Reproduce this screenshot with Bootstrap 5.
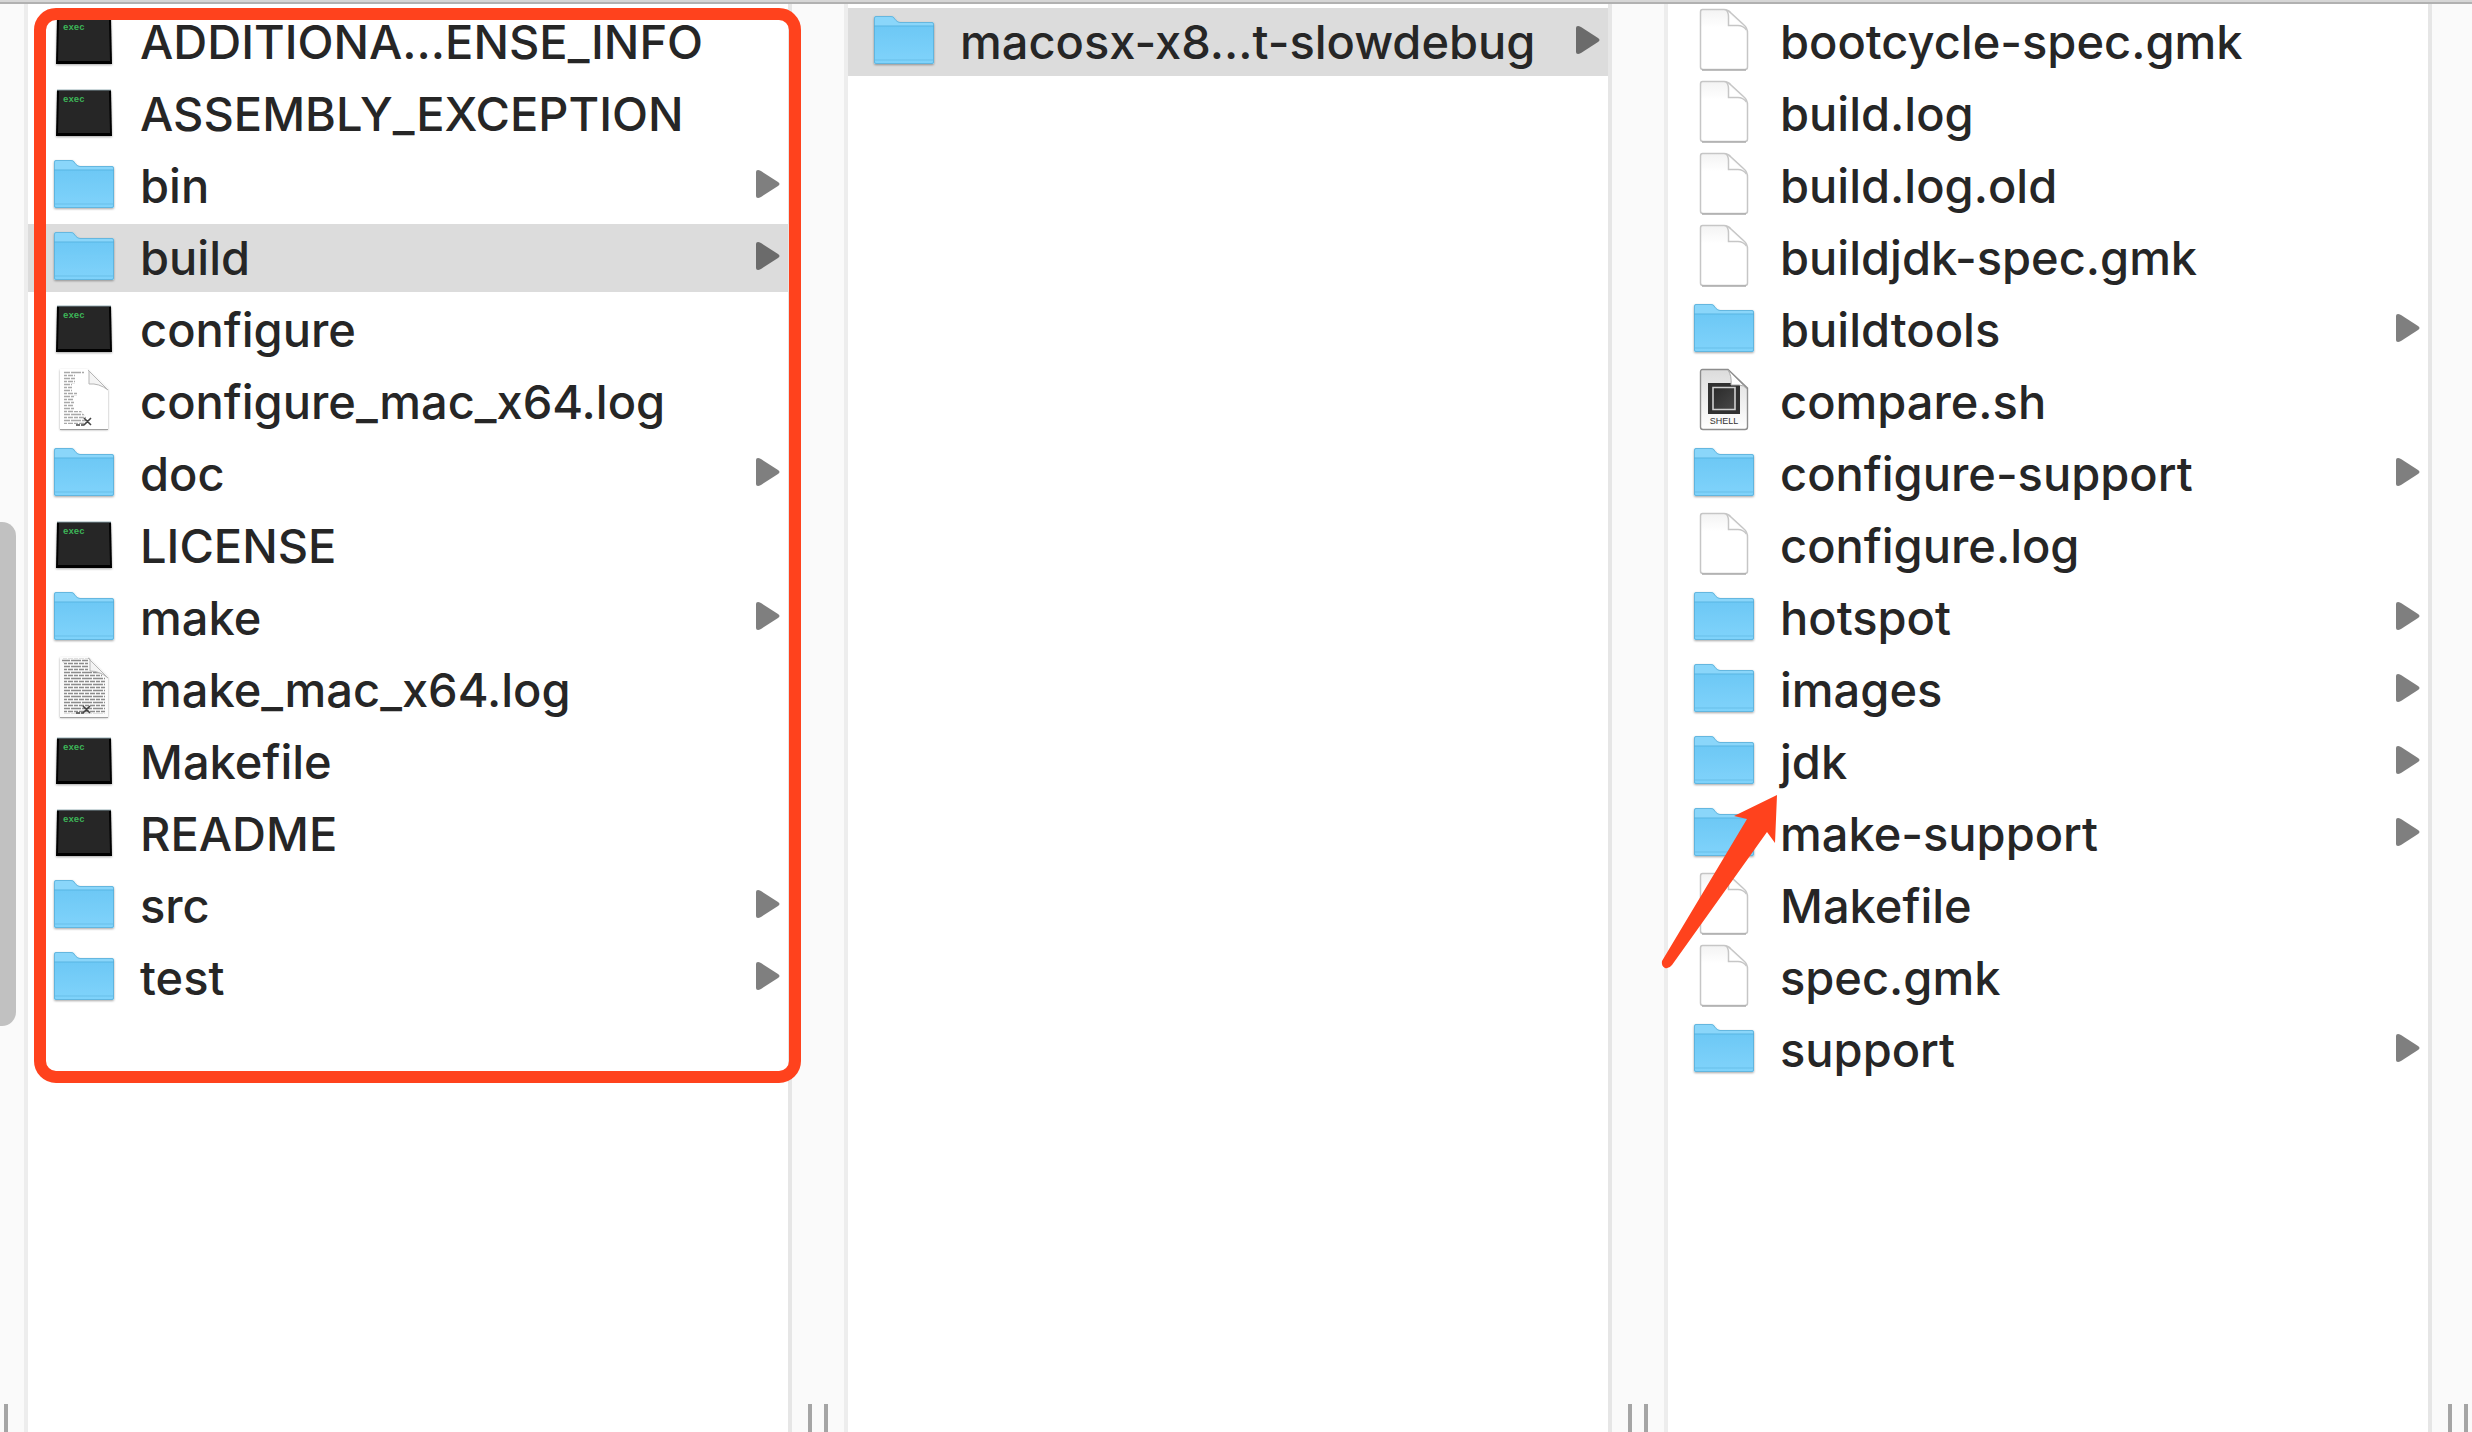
<!DOCTYPE html>
<html lang="en">
<head>
<meta charset="utf-8">
<meta name="viewport" content="width=device-width, initial-scale=1">
<title>Finder columns</title>
<link rel="stylesheet" href="https://cdn.jsdelivr.net/npm/bootstrap@5.3.0/dist/css/bootstrap.min.css">
<style>
  body { font-family: Inter, "Noto Sans", sans-serif; color: #262626; background: #fff; }
  .finder { border-top: 2px solid #d6d6d6; }
  .browser { border-top: 2px solid #b1b1b1; }
  .pane { flex: 1 1 0; min-width: 0; padding-top: 4px; }
  .entry { height: 68px; margin-bottom: 4px; padding: 0 8px 0 24px; gap: 24px; color: inherit; font-size: 47px; font-weight: 500; line-height: 68px; }
  .entry.selected { background: #dcdcdc; }
  .entry .icon { width: 64px; height: 68px; }
  .entry .chevron { width: 24px; height: 28px; margin-bottom: 4px; fill: #7f7f7f; }
  .entry.selected .chevron { fill: #6b6b6b; }
  .gutter { width: 60px; flex: none; gap: 12px; padding-left: 16px; background: #fafafa; border-left: 4px solid #e6e6e6; border-right: 4px solid #ededed; }
  .gutter-first { width: 28px; padding-left: 4px; border-left: 0; }
  .gutter-last { width: 44px; border-right: 0; }
  .grip { width: 4px; height: 28px; background: #a5a5a5; }
  .scroll-thumb { position: absolute; left: 0; top: 518px; width: 16px; height: 504px; background: #c1c1c1; border-radius: 0 14px 14px 0; }
  .highlight-box { position: absolute; top: 4px; left: 6px; right: -13px; height: 1075px; border: 12px solid #ff421d; border-radius: 22px; pointer-events: none; }
  .pointer { position: absolute; left: -8px; top: 788px; width: 124px; height: 180px; fill: #ff421d; pointer-events: none; }
</style>
</head>
<body>
<svg class="position-absolute" width="0" height="0" aria-hidden="true">
  <defs>
    <linearGradient id="g-folder" x1="0" y1="0" x2="0" y2="1"><stop offset="0" stop-color="#6dc8f5"/><stop offset="1" stop-color="#80d3fb"/></linearGradient>
    <linearGradient id="g-doc" x1="0" y1="0" x2="0" y2="1"><stop offset="0" stop-color="#f3f3f3"/><stop offset=".3" stop-color="#fff"/></linearGradient>
    <linearGradient id="g-shell" x1="0" y1="0" x2="0" y2="1"><stop offset="0" stop-color="#dcdcdc"/><stop offset="1" stop-color="#fff"/></linearGradient>
    <linearGradient id="g-screen" x1="0" y1="0" x2="1" y2="1"><stop offset="0" stop-color="#2a2a2a"/><stop offset="1" stop-color="#484848"/></linearGradient>
    <filter id="soft" x="-10%" y="-10%" width="120%" height="130%"><feDropShadow dx="0" dy="1" stdDeviation="1" flood-opacity=".35"/></filter>
    <pattern id="lines" width="11" height="6" patternUnits="userSpaceOnUse"><path d="M0 1.5H4M5 1.5H10M0 4.5H7M8 4.5H11" stroke="#8c8c8c" stroke-width="1.4"/></pattern>
  </defs>
  <symbol id="folder" viewBox="0 0 64 68">
    <g filter="url(#soft)">
      <path d="M2 54V10Q2 8 4 8H19Q21 8 22 9L24 12Q26 14 28 14H60Q62 14 62 16V54Q62 56 60 56H4Q2 56 2 54Z" fill="#8ad6fa"/>
      <path d="M2 18H62V54Q62 56 60 56H4Q2 56 2 54Z" fill="url(#g-folder)"/>
    </g>
    <path d="M2 18H62" stroke="#58b5e3"/><path d="M3 52H61" stroke="#68bfe9"/>
    <path d="M2.5 54V10Q2.5 8.500 4 8.500H19Q21 8.500 22 10L24 12.500Q26 14.500 28 14.500H60Q61.500 14.500 61.500 16V54Q61.500 55.500 60 55.500H4Q2.500 55.500 2.500 54Z" fill="none" stroke="#56a9d3" stroke-opacity=".7"/>
  </symbol>
  <symbol id="terminal" viewBox="0 0 64 68">
    <path d="M5 10H59L60 56H4Z" fill="#000" filter="url(#soft)"/>
    <path d="M5 10H59" stroke="#9fb6bd"/>
    <path d="M7 11H57L58 53H6Z" fill="#262626"/>
    <text x="11" y="22" font-family="Liberation Mono, monospace" font-weight="700" font-size="9" fill="#3db558">exec</text>
  </symbol>
  <symbol id="document" viewBox="0 0 64 68">
    <path d="M10.500 1.500H32Q36 1.500 39 5L52 17Q55.500 20 55.500 25V59Q55.500 61.500 53 61.500H11Q8.500 61.500 8.500 59V4Q8.500 1.500 10.500 1.500Z" fill="url(#g-doc)" stroke="#c6c6c6" stroke-width="1.500"/>
    <path d="M10 62H54" stroke="#acacac" stroke-width="1.500"/>
    <path d="M34 2Q36.500 4 36.500 9V17.500H46Q51 17.500 54.500 22" fill="#fff" stroke="#c6c6c6" stroke-width="1.500"/>
  </symbol>
  <symbol id="log-short" viewBox="0 0 64 68">
    <path d="M8 1H35L56 21V61H8Z" fill="#fff" filter="url(#soft)"/>
    <path d="M8 61.500H56" stroke="#a0a0a0"/>
    <path d="M12 3H32V6H23V16H20V24H25V28H22V43H29L34 49V56H12Z" fill="url(#lines)" opacity=".75"/>
    <path d="M37 3V16Q47 15 56 22L36 2Z" fill="#f4f4f4" stroke="#b5b5b5"/>
    <path d="M24 57H28M29 57H32M32 50L39 57M32 57L39 50" stroke="#444" stroke-width="1.600"/>
  </symbol>
  <symbol id="log-full" viewBox="0 0 64 68">
    <path d="M8 1H36L56 21V61H8Z" fill="#fbfbfb" filter="url(#soft)"/>
    <path d="M8 61.500H56" stroke="#a0a0a0"/>
    <path d="M10 2H36V15H50V21H53V58H12V7H10Z" fill="url(#lines)"/>
    <path d="M38 3V15Q48 15 56 22L36 2Z" fill="#f4f4f4" stroke="#b5b5b5"/>
    <path d="M24 57H28M29 57H32M31 50L38 57M31 57L38 50" stroke="#444" stroke-width="1.600"/>
  </symbol>
  <symbol id="shell" viewBox="0 0 64 68">
    <path d="M10.500 1.500H36L55.500 20V59Q55.500 61.500 53 61.500H11Q8.500 61.500 8.500 59V4Q8.500 1.500 10.500 1.500Z" fill="url(#g-shell)" stroke="#8d8d8d" stroke-width="1.400"/>
    <path d="M16 15H48V46H16Z" fill="#303030"/>
    <path d="M21 19.500H43V41.500H21Z" fill="url(#g-screen)" stroke="#d0d0d0" stroke-width="1.600"/>
    <path d="M36 2Q40 8 39 17H47Q52 17 55 21Z" fill="#fff" stroke="#aaa"/>
    <text x="32" y="56" text-anchor="middle" font-family="Liberation Sans, sans-serif" font-weight="400" font-size="9" fill="#333">SHELL</text>
  </symbol>
  <symbol id="chevron" viewBox="0 0 24 28">
    <path d="M0 2Q0 0 2 0Q3 0 5 1L22 12Q25 14 22 16L5 27Q3 28 2 28Q0 28 0 26Z"/>
  </symbol>
</svg>

<main class="finder min-vh-100 d-flex flex-column">
  <div class="browser d-flex flex-grow-1 position-relative overflow-hidden">
    <div class="gutter gutter-first d-flex align-items-end"><span class="grip"></span></div>
    <div class="scroll-thumb"></div>

    <nav class="pane position-relative" aria-label="Source folder">
      <a href="#" class="entry d-flex align-items-center text-decoration-none"><svg class="icon flex-shrink-0"><use href="#terminal"/></svg><span class="flex-grow-1 text-nowrap">ADDITIONA...ENSE_INFO</span></a>
      <a href="#" class="entry d-flex align-items-center text-decoration-none"><svg class="icon flex-shrink-0"><use href="#terminal"/></svg><span class="flex-grow-1 text-nowrap">ASSEMBLY_EXCEPTION</span></a>
      <a href="#" class="entry d-flex align-items-center text-decoration-none"><svg class="icon flex-shrink-0"><use href="#folder"/></svg><span class="flex-grow-1 text-nowrap">bin</span><svg class="chevron flex-shrink-0"><use href="#chevron"/></svg></a>
      <a href="#" class="entry selected d-flex align-items-center text-decoration-none" aria-current="true"><svg class="icon flex-shrink-0"><use href="#folder"/></svg><span class="flex-grow-1 text-nowrap">build</span><svg class="chevron flex-shrink-0"><use href="#chevron"/></svg></a>
      <a href="#" class="entry d-flex align-items-center text-decoration-none"><svg class="icon flex-shrink-0"><use href="#terminal"/></svg><span class="flex-grow-1 text-nowrap">configure</span></a>
      <a href="#" class="entry d-flex align-items-center text-decoration-none"><svg class="icon flex-shrink-0"><use href="#log-short"/></svg><span class="flex-grow-1 text-nowrap">configure_mac_x64.log</span></a>
      <a href="#" class="entry d-flex align-items-center text-decoration-none"><svg class="icon flex-shrink-0"><use href="#folder"/></svg><span class="flex-grow-1 text-nowrap">doc</span><svg class="chevron flex-shrink-0"><use href="#chevron"/></svg></a>
      <a href="#" class="entry d-flex align-items-center text-decoration-none"><svg class="icon flex-shrink-0"><use href="#terminal"/></svg><span class="flex-grow-1 text-nowrap">LICENSE</span></a>
      <a href="#" class="entry d-flex align-items-center text-decoration-none"><svg class="icon flex-shrink-0"><use href="#folder"/></svg><span class="flex-grow-1 text-nowrap">make</span><svg class="chevron flex-shrink-0"><use href="#chevron"/></svg></a>
      <a href="#" class="entry d-flex align-items-center text-decoration-none"><svg class="icon flex-shrink-0"><use href="#log-full"/></svg><span class="flex-grow-1 text-nowrap">make_mac_x64.log</span></a>
      <a href="#" class="entry d-flex align-items-center text-decoration-none"><svg class="icon flex-shrink-0"><use href="#terminal"/></svg><span class="flex-grow-1 text-nowrap">Makefile</span></a>
      <a href="#" class="entry d-flex align-items-center text-decoration-none"><svg class="icon flex-shrink-0"><use href="#terminal"/></svg><span class="flex-grow-1 text-nowrap">README</span></a>
      <a href="#" class="entry d-flex align-items-center text-decoration-none"><svg class="icon flex-shrink-0"><use href="#folder"/></svg><span class="flex-grow-1 text-nowrap">src</span><svg class="chevron flex-shrink-0"><use href="#chevron"/></svg></a>
      <a href="#" class="entry d-flex align-items-center text-decoration-none"><svg class="icon flex-shrink-0"><use href="#folder"/></svg><span class="flex-grow-1 text-nowrap">test</span><svg class="chevron flex-shrink-0"><use href="#chevron"/></svg></a>
      <div class="highlight-box z-1"></div>
    </nav>

    <div class="gutter d-flex align-items-end"><span class="grip"></span><span class="grip"></span></div>

    <nav class="pane" aria-label="Build folder">
      <a href="#" class="entry selected d-flex align-items-center text-decoration-none" aria-current="true"><svg class="icon flex-shrink-0"><use href="#folder"/></svg><span class="flex-grow-1 text-nowrap">macosx-x8...t-slowdebug</span><svg class="chevron flex-shrink-0"><use href="#chevron"/></svg></a>
    </nav>

    <div class="gutter d-flex align-items-end"><span class="grip"></span><span class="grip"></span></div>

    <nav class="pane position-relative" aria-label="Output folder">
      <a href="#" class="entry d-flex align-items-center text-decoration-none"><svg class="icon flex-shrink-0"><use href="#document"/></svg><span class="flex-grow-1 text-nowrap">bootcycle-spec.gmk</span></a>
      <a href="#" class="entry d-flex align-items-center text-decoration-none"><svg class="icon flex-shrink-0"><use href="#document"/></svg><span class="flex-grow-1 text-nowrap">build.log</span></a>
      <a href="#" class="entry d-flex align-items-center text-decoration-none"><svg class="icon flex-shrink-0"><use href="#document"/></svg><span class="flex-grow-1 text-nowrap">build.log.old</span></a>
      <a href="#" class="entry d-flex align-items-center text-decoration-none"><svg class="icon flex-shrink-0"><use href="#document"/></svg><span class="flex-grow-1 text-nowrap">buildjdk-spec.gmk</span></a>
      <a href="#" class="entry d-flex align-items-center text-decoration-none"><svg class="icon flex-shrink-0"><use href="#folder"/></svg><span class="flex-grow-1 text-nowrap">buildtools</span><svg class="chevron flex-shrink-0"><use href="#chevron"/></svg></a>
      <a href="#" class="entry d-flex align-items-center text-decoration-none"><svg class="icon flex-shrink-0"><use href="#shell"/></svg><span class="flex-grow-1 text-nowrap">compare.sh</span></a>
      <a href="#" class="entry d-flex align-items-center text-decoration-none"><svg class="icon flex-shrink-0"><use href="#folder"/></svg><span class="flex-grow-1 text-nowrap">configure-support</span><svg class="chevron flex-shrink-0"><use href="#chevron"/></svg></a>
      <a href="#" class="entry d-flex align-items-center text-decoration-none"><svg class="icon flex-shrink-0"><use href="#document"/></svg><span class="flex-grow-1 text-nowrap">configure.log</span></a>
      <a href="#" class="entry d-flex align-items-center text-decoration-none"><svg class="icon flex-shrink-0"><use href="#folder"/></svg><span class="flex-grow-1 text-nowrap">hotspot</span><svg class="chevron flex-shrink-0"><use href="#chevron"/></svg></a>
      <a href="#" class="entry d-flex align-items-center text-decoration-none"><svg class="icon flex-shrink-0"><use href="#folder"/></svg><span class="flex-grow-1 text-nowrap">images</span><svg class="chevron flex-shrink-0"><use href="#chevron"/></svg></a>
      <a href="#" class="entry d-flex align-items-center text-decoration-none"><svg class="icon flex-shrink-0"><use href="#folder"/></svg><span class="flex-grow-1 text-nowrap">jdk</span><svg class="chevron flex-shrink-0"><use href="#chevron"/></svg></a>
      <a href="#" class="entry d-flex align-items-center text-decoration-none"><svg class="icon flex-shrink-0"><use href="#folder"/></svg><span class="flex-grow-1 text-nowrap">make-support</span><svg class="chevron flex-shrink-0"><use href="#chevron"/></svg></a>
      <a href="#" class="entry d-flex align-items-center text-decoration-none"><svg class="icon flex-shrink-0"><use href="#document"/></svg><span class="flex-grow-1 text-nowrap">Makefile</span></a>
      <a href="#" class="entry d-flex align-items-center text-decoration-none"><svg class="icon flex-shrink-0"><use href="#document"/></svg><span class="flex-grow-1 text-nowrap">spec.gmk</span></a>
      <a href="#" class="entry d-flex align-items-center text-decoration-none"><svg class="icon flex-shrink-0"><use href="#folder"/></svg><span class="flex-grow-1 text-nowrap">support</span><svg class="chevron flex-shrink-0"><use href="#chevron"/></svg></a>
      <svg class="pointer z-1" viewBox="0 0 124 180" aria-hidden="true"><path d="M117 3L74 24L87 27L2 169Q1 174 5 176Q9 177 12 173L107 40L115 51Z"/></svg>
    </nav>

    <div class="gutter gutter-last d-flex align-items-end"><span class="grip"></span><span class="grip"></span></div>
  </div>
</main>
<script src="https://cdn.jsdelivr.net/npm/bootstrap@5.3.0/dist/js/bootstrap.bundle.min.js"></script>
</body>
</html>
